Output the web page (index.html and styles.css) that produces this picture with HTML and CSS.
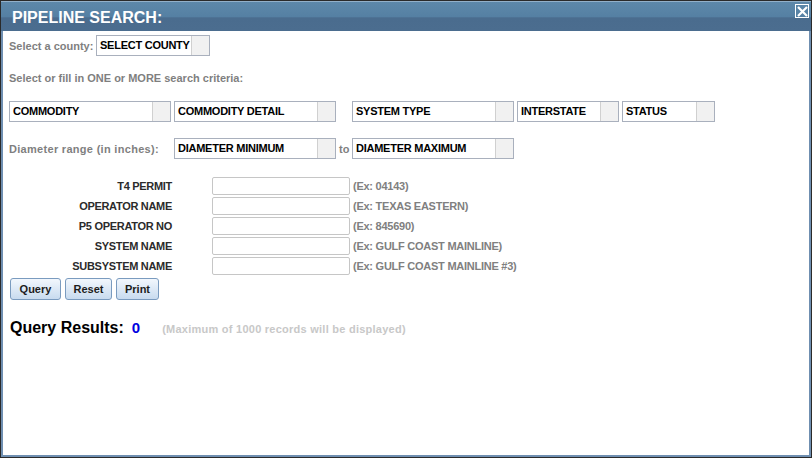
FILE: index.html
```html
<!DOCTYPE html>
<html lang="en">
<head>
    <meta charset="UTF-8">
    <title>Pipeline Search</title>
    <link rel="stylesheet" href="styles.css">
</head>
<body>
    <div class="dialog">
        <div class="frame">
            <div class="header">
                <h1>PIPELINE SEARCH:</h1>
                <div class="close">
                    <svg width="11" height="11" viewBox="0 0 11 11">
                        <path d="M1 1 L10 10 M10 1 L1 10" stroke="#fff" stroke-width="2.2"/>
                    </svg>
                </div>
            </div>

            <div class="content">
                <div class="row county-row">
                    <span class="label">Select a county:</span>
                    <div class="select w-county"><span>SELECT COUNTY</span><i></i></div>
                </div>

                <div class="hint-line label">Select or fill in ONE or MORE search criteria:</div>

                <div class="row select-row">
                    <div class="select w-wide"><span>COMMODITY</span><i></i></div>
                    <div class="select w-wide"><span>COMMODITY DETAIL</span><i></i></div>
                    <div class="select w-wide gap-left"><span>SYSTEM TYPE</span><i></i></div>
                    <div class="select w-inter"><span>INTERSTATE</span><i></i></div>
                    <div class="select w-status"><span>STATUS</span><i></i></div>
                </div>

                <div class="row diameter-row">
                    <span class="label diam-label">Diameter range (in inches):</span>
                    <div class="select w-wide"><span>DIAMETER MINIMUM</span><i></i></div>
                    <span class="label to">to</span>
                    <div class="select w-wide"><span>DIAMETER MAXIMUM</span><i></i></div>
                </div>

                <div class="fields">
                    <label>T4 PERMIT</label>
                    <input type="text">
                    <span class="example">(Ex: 04143)</span>

                    <label>OPERATOR NAME</label>
                    <input type="text">
                    <span class="example">(Ex: TEXAS EASTERN)</span>

                    <label>P5 OPERATOR NO</label>
                    <input type="text">
                    <span class="example">(Ex: 845690)</span>

                    <label>SYSTEM NAME</label>
                    <input type="text">
                    <span class="example">(Ex: GULF COAST MAINLINE)</span>

                    <label>SUBSYSTEM NAME</label>
                    <input type="text">
                    <span class="example">(Ex: GULF COAST MAINLINE #3)</span>
                </div>

                <div class="buttons">
                    <button class="btn-query">Query</button>
                    <button class="btn-reset">Reset</button>
                    <button class="btn-print">Print</button>
                </div>

                <div class="results">
                    <span class="results-title">Query Results:</span>
                    <span class="results-count">0</span>
                    <span class="results-note">(Maximum of 1000 records will be displayed)</span>
                </div>
            </div>
        </div>
    </div>
</body>
</html>
```

FILE: styles.css
```css
* {
    box-sizing: border-box;
    margin: 0;
    padding: 0;
}

body {
    width: 812px;
    height: 458px;
    background: #fff;
    font-family: 'Liberation Sans', Arial, sans-serif;
    font-size: 11px;
    font-weight: bold;
}

.dialog {
    width: 812px;
    height: 458px;
    border: 1px solid #2a2a2a;
}

.frame {
    height: 100%;
    border: 2px solid #6f8fb1;
    border-top: 0;
    background: #fff;
}

.header {
    position: relative;
    height: 30px;
    margin: 0 -2px;
    border-top: 1px solid #92b0c9;
    background: linear-gradient(to bottom, #5d88aa 0%, #5580a3 50%, #4a6c8e 55%, #4b6d8f 100%);
    padding: 3px 0 0 11px;
}

.header h1 {
    color: #fff;
    font-size: 16px;
    line-height: 26px;
    font-weight: bold;
}

.close {
    position: absolute;
    top: 2px;
    right: 2px;
    width: 14px;
    height: 14px;
    border: 1px solid #fff;
    display: flex;
    align-items: center;
    justify-content: center;
}

.content {
    padding: 4px 0 0 6px;
}

.row {
    display: flex;
    align-items: center;
}

.label {
    color: #7f7f7f;
}

.county-row .label {
    width: 87px;
}

.select {
    display: flex;
    height: 21px;
    border: 1px solid #a9b0bd;
    background: #fff;
}

.select span {
    flex: 1;
    color: #000;
    line-height: 19px;
    padding-left: 3px;
    letter-spacing: -0.25px;
    white-space: nowrap;
    overflow: hidden;
}

.select i {
    width: 18px;
    background: #f1f1f1;
    border-left: 1px solid #d0d0d0;
}

.w-county { width: 114px; }
.w-wide { width: 162px; }
.w-inter { width: 102px; }
.w-status { width: 93px; }

.hint-line {
    margin-top: 12px;
    line-height: 20px;
}

.select-row {
    margin-top: 13px;
    gap: 3px;
}

.select-row .gap-left {
    margin-left: 13px;
}

.diameter-row {
    margin-top: 16px;
}

.diam-label {
    width: 165px;
    letter-spacing: 0.3px;
}

.to {
    width: 16px;
    padding-left: 3px;
}

.fields {
    display: grid;
    grid-template-columns: 163px 138px auto;
    row-gap: 2px;
    margin-top: 18px;
    align-items: center;
}

.fields label {
    text-align: right;
    color: #2b2b2b;
    letter-spacing: -0.3px;
}

.fields input {
    grid-column: 2;
    margin-left: 40px;
    width: 138px;
    height: 18px;
    border: 1px solid #c6c6c6;
    border-radius: 2px;
}

.fields .example {
    color: #808080;
    padding-left: 43px;
    letter-spacing: -0.25px;
}

.buttons {
    display: flex;
    gap: 4px;
    margin-top: 3px;
    padding-left: 1px;
}

.buttons button {
    height: 22px;
    font-family: inherit;
    font-size: 11px;
    font-weight: bold;
    color: #1c1c1c;
    border: 1px solid #7a9bbf;
    border-radius: 3px;
    background: linear-gradient(to bottom, #f2f7fd 0%, #dde9f6 50%, #c8dbef 100%);
}

.btn-query { width: 51px; }
.btn-reset { width: 47px; }
.btn-print { width: 43px; }

.results {
    margin-top: 18px;
    padding-left: 1px;
    display: flex;
    align-items: baseline;
    line-height: 20px;
}

.results-title {
    font-size: 16px;
    color: #000;
}

.results-count {
    font-size: 15px;
    color: #0000e0;
    margin-left: 8px;
}

.results-note {
    color: #c8c8c8;
    margin-left: 22px;
    letter-spacing: 0.25px;
}
```
